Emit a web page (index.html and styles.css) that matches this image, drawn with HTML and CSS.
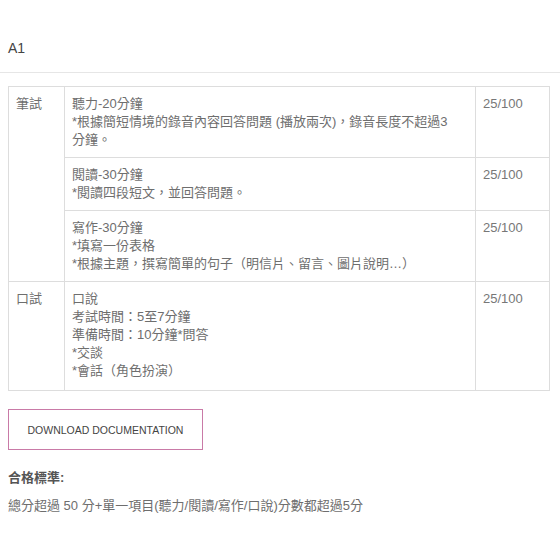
FILE: index.html
```html
<!DOCTYPE html>
<html lang="zh-Hant">
<head>
<meta charset="utf-8">
<link rel="stylesheet" href="styles.css">
</head>
<body>
<div class="header"><span class="level">A1</span></div>
<div class="content">
<table class="exam">
<tr>
<td class="cat" rowspan="3">筆試</td>
<td class="desc">聽力-20分鐘<br>*根據簡短情境的錄音內容回答問題 (播放兩次)，錄音長度不超過3<br>分鐘。</td>
<td class="score">25/100</td>
</tr>
<tr>
<td class="desc">閱讀-30分鐘<br>*閱讀四段短文，並回答問題。</td>
<td class="score">25/100</td>
</tr>
<tr>
<td class="desc">寫作-30分鐘<br>*填寫一份表格<br>*根據主題，撰寫簡單的句子（明信片、留言、圖片說明…）</td>
<td class="score">25/100</td>
</tr>
<tr class="last">
<td class="cat">口試</td>
<td class="desc">口說<br>考試時間：5至7分鐘<br>準備時間：10分鐘*問答<br>*交談<br>*會話（角色扮演）</td>
<td class="score">25/100</td>
</tr>
</table>
<a class="btn" href="#">DOWNLOAD DOCUMENTATION</a>
<p class="crit-title">合格標準:</p>
<p class="crit">總分超過 50 分+單一項目(聽力/閱讀/寫作/口說)分數都超過5分</p>
</div>
</body>
</html>
```
FILE: styles.css
```css
html, body {
  margin: 0;
  padding: 0;
  background: #fff;
}
body {
  font-family: "Liberation Sans", "Noto Sans CJK TC", Arial, sans-serif;
  font-size: 13px;
  color: #6e6e6e;
}
.header {
  height: 73px;
  border-bottom: 1px solid #e6e6e6;
  padding: 0 8px 16px 8px;
  display: flex;
  align-items: flex-end;
  box-sizing: border-box;
}
.level {
  font-size: 14px;
  line-height: 16px;
  color: #444;
}
.content {
  padding: 13px 8px 0 8px;
}
.exam {
  width: 542px;
  border-collapse: collapse;
  border: 1px solid #ddd;
}
.exam td {
  border: 1px solid #ddd;
  padding: 8px 7px 8px 7px;
  vertical-align: top;
  line-height: 18px;
}
.exam .last td {
  padding-bottom: 10px;
}
.cat {
  width: 41px;
}
.desc {
  width: 396px;
}
.score {
  color: #777;
}
.btn {
  display: flex;
  align-items: center;
  justify-content: center;
  width: 195px;
  height: 41px;
  box-sizing: border-box;
  border: 1px solid #c97aa7;
  margin-top: 18px;
  font-size: 10.5px;
  color: #444;
  text-decoration: none;
}
.crit-title {
  margin: 19px 0 0 0;
  font-weight: bold;
  color: #555;
  line-height: 18px;
}
.crit {
  margin: 10px 0 0 0;
  line-height: 18px;
}
```
